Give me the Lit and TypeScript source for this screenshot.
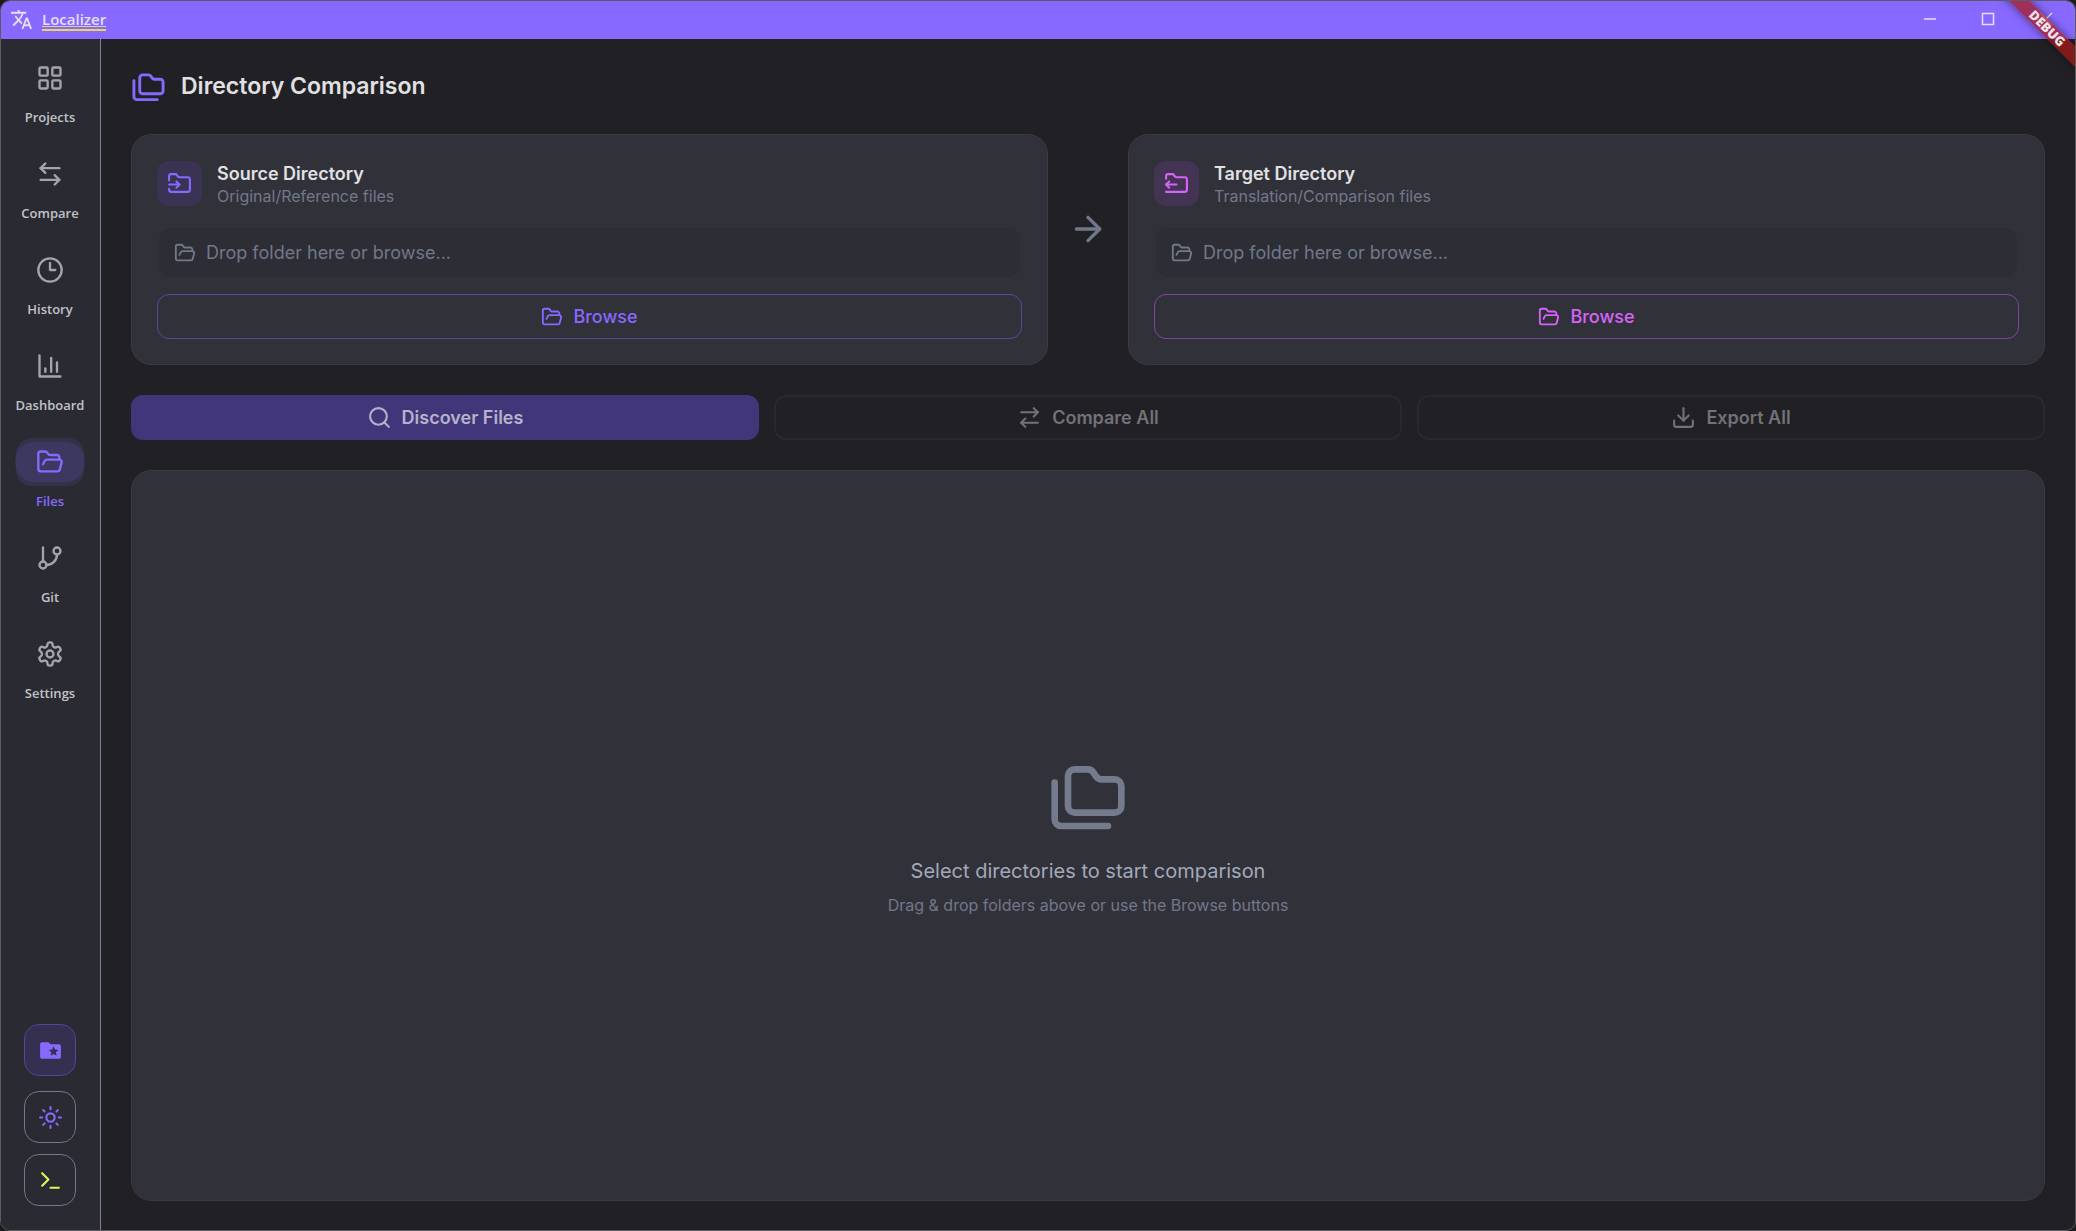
import { LitElement, html, svg, css, type SVGTemplateResult } from "lit";
import { customElement, property } from "lit/decorators.js";
import { classMap } from "lit/directives/class-map.js";

const icons: Record<string, SVGTemplateResult> = {
  grid: svg`<rect x="3" y="3" width="7" height="7" rx="1"/><rect x="14" y="3" width="7" height="7" rx="1"/><rect x="14" y="14" width="7" height="7" rx="1"/><rect x="3" y="14" width="7" height="7" rx="1"/>`,
  swapLeft: svg`<path d="M8 3 4 7l4 4"/><path d="M4 7h16"/><path d="m16 21 4-4-4-4"/><path d="M20 17H4"/>`,
  swapRight: svg`<path d="m16 3 4 4-4 4"/><path d="M20 7H4"/><path d="m8 21-4-4 4-4"/><path d="M4 17h16"/>`,
  clock: svg`<circle cx="12" cy="12" r="10"/><path d="M12 6v6h4.5"/>`,
  chart: svg`<path d="M3 3v18h18"/><path d="M18 17V9"/><path d="M13 17V5"/><path d="M8 17v-3"/>`,
  folderOpen: svg`<path d="m6 14 1.45-2.9A2 2 0 0 1 9.24 10H20a2 2 0 0 1 1.94 2.5l-1.55 6a2 2 0 0 1-1.94 1.5H4a2 2 0 0 1-2-2V5c0-1.1.9-2 2-2h3.93a2 2 0 0 1 1.66.9l.82 1.2a2 2 0 0 0 1.66.9H18a2 2 0 0 1 2 2v2"/>`,
  branch: svg`<path d="M6 3v12"/><circle cx="18" cy="6" r="3"/><circle cx="6" cy="18" r="3"/><path d="M18 9a9 9 0 0 1-9 9"/>`,
  gear: svg`<path d="M12.22 2h-.44a2 2 0 0 0-2 2v.18a2 2 0 0 1-1 1.73l-.43.25a2 2 0 0 1-2 0l-.15-.08a2 2 0 0 0-2.73.73l-.22.38a2 2 0 0 0 .73 2.73l.15.1a2 2 0 0 1 1 1.72v.51a2 2 0 0 1-1 1.74l-.15.09a2 2 0 0 0-.73 2.73l.22.38a2 2 0 0 0 2.73.73l.15-.08a2 2 0 0 1 2 0l.43.25a2 2 0 0 1 1 1.73V20a2 2 0 0 0 2 2h.44a2 2 0 0 0 2-2v-.18a2 2 0 0 1 1-1.73l.43-.25a2 2 0 0 1 2 0l.15.08a2 2 0 0 0 2.73-.73l.22-.39a2 2 0 0 0-.73-2.73l-.15-.08a2 2 0 0 1-1-1.74v-.5a2 2 0 0 1 1-1.74l.15-.09a2 2 0 0 0 .73-2.73l-.22-.38a2 2 0 0 0-2.73-.73l-.15.08a2 2 0 0 1-2 0l-.43-.25a2 2 0 0 1-1-1.73V4a2 2 0 0 0-2-2z"/><circle cx="12" cy="12" r="3"/>`,
  folders: svg`<path d="M8 17h12a2 2 0 0 0 2-2V9a2 2 0 0 0-2-2h-3.93a2 2 0 0 1-1.66-.89l-.82-1.22A2 2 0 0 0 11.93 4H8a2 2 0 0 0-2 2v9c0 1.1.9 2 2 2Z"/><path d="M2 8v11c0 1.1.9 2 2 2h14"/>`,
  folderInput: svg`<path d="M2 9V5c0-1.1.9-2 2-2h3.93a2 2 0 0 1 1.66.9l.82 1.2a2 2 0 0 0 1.66.9H20a2 2 0 0 1 2 2v10a2 2 0 0 1-2 2H4a2 2 0 0 1-2-2v-1"/><path d="M2 13h10"/><path d="m9 16 3-3-3-3"/>`,
  folderOutput: svg`<path d="M2 7.5V5c0-1.1.9-2 2-2h3.93a2 2 0 0 1 1.66.9l.82 1.2a2 2 0 0 0 1.66.9H20a2 2 0 0 1 2 2v10a2 2 0 0 1-2 2H2"/><path d="M2 13h10"/><path d="m5 10-3 3 3 3"/>`,
  arrow: svg`<path d="M5 12h14"/><path d="m12 5 7 7-7 7"/>`,
  search: svg`<circle cx="11" cy="11" r="8"/><path d="m21 21-4.3-4.3"/>`,
  download: svg`<path d="M21 15v4a2 2 0 0 1-2 2H5a2 2 0 0 1-2-2v-4"/><path d="m7 10 5 5 5-5"/><path d="M12 15V3"/>`,
  sun: svg`<circle cx="12" cy="12" r="4"/><path d="M12 2v2"/><path d="M12 20v2"/><path d="m4.93 4.93 1.41 1.41"/><path d="m17.66 17.66 1.41 1.41"/><path d="M2 12h2"/><path d="M20 12h2"/><path d="m6.34 17.66-1.41 1.41"/><path d="m19.07 4.93-1.41 1.41"/>`,
  terminal: svg`<path d="m4 17 6-6-6-6"/><path d="M12 19h8"/>`,
  translate: svg`<path class="solid" d="M12.87 15.07l-2.54-2.51.03-.03c1.74-1.94 2.98-4.17 3.71-6.53H17V4h-7V2H8v2H1v1.99h11.17C11.5 7.92 10.44 9.75 9 11.35 8.07 10.32 7.3 9.19 6.69 8h-2c.73 1.63 1.73 3.17 2.98 4.56l-5.09 5.02L4 19l5-5 3.11 3.11.76-2.04zM18.5 10h-2L12 22h2l1.12-3h4.75L21 22h2l-4.5-12zm-2.62 7l1.62-4.33L19.12 17h-3.24z"/>`,
  folderStar: svg`<path class="solid" d="M20 6h-8l-2-2H4c-1.1 0-1.99.9-1.99 2L2 18c0 1.1.9 2 2 2h16c1.1 0 2-.9 2-2V8c0-1.1-.9-2-2-2zm-2.06 11L15 15.28 12.06 17l.78-3.33-2.59-2.24 3.41-.29L15 8l1.34 3.14 3.41.29-2.59 2.24.78 3.33z"/>`,
  minimize: svg`<path class="glyph" d="M0 12h24"/>`,
  maximize: svg`<path class="glyph" d="M1 1h22v22H1z"/>`,
  close: svg`<path class="glyph" d="m0 0 24 24M24 0 0 24"/>`,
};

@customElement("ui-icon")
export class UiIcon extends LitElement {
  @property() name = "";

  static styles = css`
    :host { display: block; flex: none; width: 24px; height: 24px; }
    svg {
      display: block; width: 100%; height: 100%; overflow: visible;
      fill: none; stroke: currentColor; stroke-width: 2;
      stroke-linecap: round; stroke-linejoin: round;
    }
    .solid { fill: currentColor; stroke: none; }
    .glyph { stroke-width: 3; stroke-linecap: butt; stroke-linejoin: miter; }
  `;

  render() {
    return html`<svg viewBox="0 0 24 24" aria-hidden="true">${icons[this.name]}</svg>`;
  }
}

@customElement("directory-card")
export class DirectoryCard extends LitElement {
  @property() heading = "";
  @property() note = "";
  @property() icon = "";

  static styles = css`
    :host { display: block; }
    .card {
      display: flex; flex-direction: column; box-sizing: border-box;
      padding: 26px 25px 25px; border: 1px solid #3a3a44; border-radius: 20px;
      background: #31313a; font-family: Inter, sans-serif;
    }
    .head { display: flex; align-items: center; gap: 15px; margin-bottom: 20px; }
    .tile {
      display: grid; place-items: center; width: 45px; height: 45px;
      border-radius: 12px; background: var(--tint); color: var(--accent);
    }
    .tile ui-icon { width: 25px; height: 25px; }
    h2 { margin: 0; font-size: 18px; line-height: 25px; font-weight: 600; color: #e1e1e3; }
    p { margin: 0; font-size: 16px; line-height: 20px; color: #717889; }
    .field {
      display: flex; align-items: center; gap: 10px; box-sizing: border-box;
      height: 53px; padding: 0 15px; margin-bottom: 15px;
      border: 2px solid transparent; border-radius: 14px;
      background: #2d2d35; background-clip: padding-box; color: #717889;
    }
    .field ui-icon, button ui-icon { width: 22px; height: 22px; }
    input {
      flex: 1; min-width: 0; padding: 0; border: 0; outline: 0; background: none;
      color: #e1e1e3; font: 400 18px/24px Inter, sans-serif;
    }
    input::placeholder { color: #717889; opacity: 1; }
    button {
      display: flex; align-items: center; justify-content: center; gap: 10px;
      height: 45px; border: 1px solid var(--edge); border-radius: 12px;
      background: none; color: var(--accent); font: 500 18px/24px Inter, sans-serif;
    }
  `;

  render() {
    return html`
      <section class="card">
        <div class="head">
          <div class="tile"><ui-icon name=${this.icon}></ui-icon></div>
          <div><h2>${this.heading}</h2><p>${this.note}</p></div>
        </div>
        <label class="field">
          <ui-icon name="folderOpen"></ui-icon>
          <input type="text" aria-label=${this.heading} placeholder="Drop folder here or browse..." />
        </label>
        <button type="button"><ui-icon name="folderOpen"></ui-icon>Browse</button>
      </section>
    `;
  }
}

const navItems = [
  { label: "Projects", icon: "grid" },
  { label: "Compare", icon: "swapLeft" },
  { label: "History", icon: "clock" },
  { label: "Dashboard", icon: "chart" },
  { label: "Files", icon: "folderOpen" },
  { label: "Git", icon: "branch" },
  { label: "Settings", icon: "gear" },
];

@customElement("app-root")
export class AppRoot extends LitElement {
  static styles = css`
    :host { display: block; background: #1b1b1b; font-family: Inter, sans-serif; }
    button { padding: 0; border: 0; background: none; font: inherit; color: inherit; }
    .window {
      position: relative; display: flex; flex-direction: column; box-sizing: border-box;
      min-height: 100vh; overflow: hidden;
      border: 1px solid #5c5c5e; border-radius: 10px; background: #212024;
    }
    .titlebar {
      display: flex; align-items: center; height: 38px; padding-left: 9px;
      background: #8769ff; color: #e2e0ec;
    }
    .titlebar .logo { width: 23px; height: 23px; margin-bottom: 2px; }
    .brand { flex: 1; display: flex; margin-left: 9px; }
    .name {
      border-bottom: 2px solid #e6d65c; font: 600 15px/20px "Open Sans", sans-serif;
      text-decoration: underline 1px #e0cfae; text-underline-offset: 1px;
      text-decoration-skip-ink: none;
    }
    .control { display: grid; place-items: center; width: 58px; height: 38px; }
    .control ui-icon { width: 12px; height: 12px; margin-bottom: 2px; }
    .banner {
      position: absolute; top: 20px; right: -72px; width: 200px; height: 15px;
      transform: rotate(45deg); background: rgba(170, 24, 24, 0.7);
      box-shadow: 0 0 8px rgba(0, 0, 0, 0.5); pointer-events: none;
      color: #efe4e6; text-align: center; font: 900 13px/15px "Noto Sans", sans-serif;
    }
    .body { flex: 1; display: flex; }
    .side {
      display: flex; flex-direction: column; align-items: center; box-sizing: border-box;
      width: 100px; padding: 19px 1px 24px 0; background: #2a2a33; border-right: 1px solid #7a8294;
    }
    nav { display: flex; flex-direction: column; align-items: center; }
    .item {
      display: flex; flex-direction: column; align-items: center; gap: 9px; height: 96px;
      text-decoration: none; color: #c3c3c6;
      font: 600 13px/20px "Open Sans", sans-serif;
    }
    .mark {
      position: relative; display: grid; place-items: center;
      width: 70px; height: 40px; border-radius: 20px; color: #a5a5a9;
    }
    .mark ui-icon { width: 28px; height: 28px; }
    .active { color: #8769ff; }
    .active .mark { background: rgba(135, 105, 255, 0.12); color: #8769ff; }
    .active .mark::before {
      content: ""; position: absolute; inset: -4px 1px; border-radius: 16px;
      background: rgba(135, 105, 255, 0.12);
    }
    .tools { display: flex; flex-direction: column; gap: 11px; margin-top: auto; }
    .tool {
      display: grid; place-items: center; width: 52px; height: 52px; box-sizing: border-box;
      border: 1px solid #717889; border-radius: 15px; color: #8769ff;
    }
    .tool ui-icon { width: 25px; height: 25px; }
    .pinned { background: #35304f; border-color: #54439f; margin-bottom: 4px; }
    .console { color: #e0f55a; }
    main { flex: 1; min-width: 0; display: flex; flex-direction: column; gap: 30px; padding: 30px 30px 29px; }
    header { display: flex; align-items: center; gap: 15px; color: #8769ff; }
    header ui-icon { width: 35px; height: 35px; }
    h1 { margin: 0; font-size: 23px; line-height: 35px; font-weight: 600; color: #e1e1e3; }
    .pair { display: flex; }
    directory-card { flex: 1; }
    .source { --accent: #8769ff; --tint: #3a3354; --edge: #5847a5; }
    .target { --accent: #d863f9; --tint: #443454; --edge: #8445a2; }
    .between { width: 40px; height: 40px; margin: 75px 20px 0; color: #717889; }
    .actions { display: grid; grid-template-columns: repeat(3, 1fr); gap: 15px; }
    .action {
      display: flex; align-items: center; justify-content: center; gap: 10px; box-sizing: border-box;
      height: 45px; border: 2px solid #29282d; border-radius: 12px;
      font-size: 18px; line-height: 24px; font-weight: 600; color: #737276;
    }
    .action ui-icon { width: 25px; height: 25px; }
    .primary { background: #42367a; border-color: #42367a; color: #b7b2cc; }
    .empty {
      flex: 1; display: flex; flex-direction: column; align-items: center; justify-content: center;
      border: 1px solid #3a3a44; border-radius: 20px; background: #31313a; color: #737b8c;
    }
    .empty ui-icon { width: 80px; height: 80px; }
    .empty h2 { margin: 20px 0 10px; font-size: 20px; line-height: 30px; font-weight: 400; color: #a3a9b9; }
    .empty p { margin: 0; font-size: 16px; line-height: 19px; color: #717889; }
  `;

  render() {
    return html`
      <div class="window">
        <div class="titlebar">
          <ui-icon class="logo" name="translate"></ui-icon>
          <div class="brand"><span class="name">Localizer</span></div>
          <button class="control" type="button" aria-label="Minimize"><ui-icon name="minimize"></ui-icon></button>
          <button class="control" type="button" aria-label="Maximize"><ui-icon name="maximize"></ui-icon></button>
          <button class="control" type="button" aria-label="Close"><ui-icon name="close"></ui-icon></button>
        </div>
        <div class="body">
          <div class="side">
            <nav>
              ${navItems.map(({ label, icon }) => html`
                <a href="#${label.toLowerCase()}" class=${classMap({ item: true, active: label === "Files" })}>
                  <span class="mark"><ui-icon name=${icon}></ui-icon></span>
                  <span>${label}</span>
                </a>
              `)}
            </nav>
            <div class="tools">
              <button class="tool pinned" type="button" aria-label="Pinned folders"><ui-icon name="folderStar"></ui-icon></button>
              <button class="tool" type="button" aria-label="Theme"><ui-icon name="sun"></ui-icon></button>
              <button class="tool console" type="button" aria-label="Console"><ui-icon name="terminal"></ui-icon></button>
            </div>
          </div>
          <main>
            <header>
              <ui-icon name="folders"></ui-icon>
              <h1>Directory Comparison</h1>
            </header>
            <div class="pair">
              <directory-card class="source" heading="Source Directory" note="Original/Reference files" icon="folderInput"></directory-card>
              <ui-icon class="between" name="arrow"></ui-icon>
              <directory-card class="target" heading="Target Directory" note="Translation/Comparison files" icon="folderOutput"></directory-card>
            </div>
            <div class="actions">
              <button class="action primary" type="button"><ui-icon name="search"></ui-icon>Discover Files</button>
              <button class="action" type="button"><ui-icon name="swapRight"></ui-icon>Compare All</button>
              <button class="action" type="button"><ui-icon name="download"></ui-icon>Export All</button>
            </div>
            <section class="empty">
              <ui-icon name="folders"></ui-icon>
              <h2>Select directories to start comparison</h2>
              <p>Drag &amp; drop folders above or use the Browse buttons</p>
            </section>
          </main>
        </div>
        <div class="banner">DEBUG</div>
      </div>
    `;
  }
}
